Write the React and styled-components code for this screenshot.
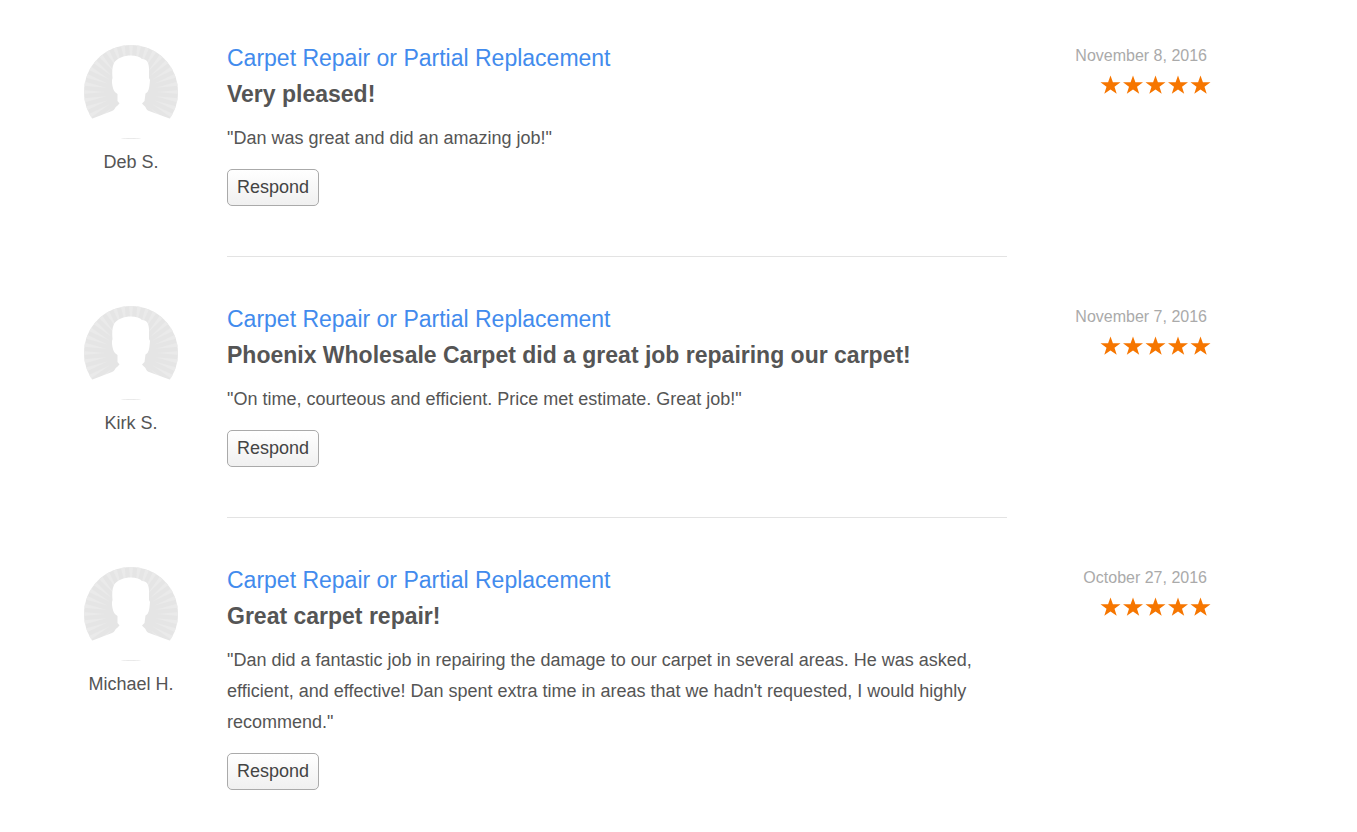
import React from 'react';
import styled, { createGlobalStyle } from 'styled-components';

const GlobalStyle = createGlobalStyle`
  body {
    margin: 0;
    background: #fff;
    color: #555;
    font-family: Arial, "Liberation Sans", sans-serif;
  }
`;

const List = styled.main`
  display: flex;
  flex-direction: column;
  gap: 44px;
  padding: 40px 146px 40px 84px;
`;

const Row = styled.article`
  display: grid;
  grid-template-columns: 94px minmax(0, 1fr) 134px;
  align-items: start;
`;

const Person = styled.div`
  padding-top: 5px;
  font-size: 18px;
  line-height: 24px;
  text-align: center;
`;

const AvatarIcon = styled.svg`
  display: block;
  width: 94px;
  height: 94px;
  margin-bottom: 11px;
`;

const Content = styled.div`
  margin: 0 70px 0 49px;
  padding-bottom: ${({ $last }) => ($last ? '0' : '50px')};
  border-bottom: ${({ $last }) => ($last ? 'none' : '1px solid #e3e3e3')};
`;

const Service = styled.a`
  display: block;
  color: #428bed;
  font-size: 23px;
  line-height: 36px;
  text-decoration: none;

  &:hover {
    text-decoration: underline;
  }
`;

const Headline = styled.h2`
  margin: 0 0 11px;
  font-size: 23px;
  line-height: 36px;
`;

const Quote = styled.p`
  margin: 0 0 15px;
  font-size: 18px;
  line-height: 31px;
`;

const Button = styled.button`
  display: block;
  height: 37px;
  padding: 0 9px;
  border: 1px solid #aaa;
  border-radius: 5px;
  background: linear-gradient(#fff, #f0f0f0);
  color: #444;
  font-family: inherit;
  font-size: 18px;
  cursor: pointer;
`;

const Meta = styled.div`
  display: flex;
  flex-direction: column;
  align-items: flex-end;
  padding-top: 4px;
`;

const PostedOn = styled.time`
  padding-right: 4px;
  color: #aaa;
  font-size: 16px;
  line-height: 24px;
  white-space: nowrap;
`;

const Stars = styled.svg`
  display: block;
  width: 111px;
  height: 20px;
  margin-top: 7px;
  fill: #f67600;
`;

const reviews = [
  {
    name: 'Deb S.',
    headline: 'Very pleased!',
    quote: '"Dan was great and did an amazing job!"',
    date: 'November 8, 2016',
  },
  {
    name: 'Kirk S.',
    headline: 'Phoenix Wholesale Carpet did a great job repairing our carpet!',
    quote: '"On time, courteous and efficient. Price met estimate. Great job!"',
    date: 'November 7, 2016',
  },
  {
    name: 'Michael H.',
    headline: 'Great carpet repair!',
    quote:
      '"Dan did a fantastic job in repairing the damage to our carpet in several areas. He was asked, efficient, and effective! Dan spent extra time in areas that we hadn\'t requested, I would highly recommend."',
    date: 'October 27, 2016',
  },
];

const rays = Array.from({ length: 36 }, (_, i) => i * 10);

const Avatar = () => (
  <AvatarIcon viewBox="0 0 94 94" aria-hidden="true">
    <circle cx="47" cy="47" r="47" fill="#e5e5e5" />
    {rays.map((angle) => (
      <path key={angle} d="M47 22 L45 0 H49 Z" fill="#eaeaea" transform={`rotate(${angle} 47 47)`} />
    ))}
    <path
      fill="#fff"
      d="M0 77 L8.5 73.5 L28 66 C31 65 31 62 33 61 L35.5 58.500 L33.500 56 L33.500 49
         L31.500 47.500 C29.500 46 28.500 42 28 38 L28 35 L28.500 33 C28 27 28 22 30 18
         C33 13 40 10.500 47 10.500 C52 10.500 56 12 58 14 C63 14 65 18 65 24
         L65 33 L66 35 C65.500 39 65.500 44 63.500 47 L61.500 48.500
         L60.500 56 L58 58.500 L60.500 61 C62 62 62 65 65 66 L85.500 73.500
         L94 77 V93 H0 Z"
    />
  </AvatarIcon>
);

const Rating = () => (
  <Stars viewBox="0 0 111 20" role="img" aria-label="5 out of 5 stars">
    {[0, 1, 2, 3, 4].map((n) => (
      <path
        key={n}
        transform={`translate(${n * 22.5} 0)`}
        d="M10.500 0.500 L12.900 7.300 L20.500 7.300 L14.500 11.800 L16.700 18.800 L10.500 14.600 L4.300 18.800 L6.500 11.800 L0.500 7.300 L8.100 7.300 Z"
      />
    ))}
  </Stars>
);

const Review = ({ name, headline, quote, date, last }) => (
  <Row>
    <Person>
      <Avatar />
      {name}
    </Person>
    <Content $last={last}>
      <Service href="#">Carpet Repair or Partial Replacement</Service>
      <Headline>{headline}</Headline>
      <Quote>{quote}</Quote>
      <Button type="button">Respond</Button>
    </Content>
    <Meta>
      <PostedOn>{date}</PostedOn>
      <Rating />
    </Meta>
  </Row>
);

const App = () => (
  <>
    <GlobalStyle />
    <List>
      {reviews.map((review, i) => (
        <Review key={review.name} {...review} last={i === reviews.length - 1} />
      ))}
    </List>
  </>
);

export default App;
